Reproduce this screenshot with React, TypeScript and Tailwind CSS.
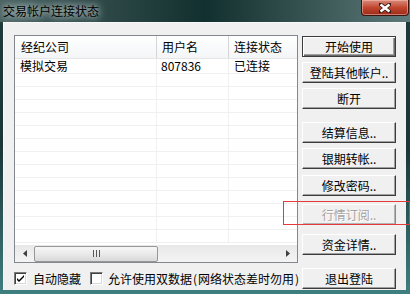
import React from 'react';

const font = "font-['SimSun','Noto_Sans_CJK_SC',sans-serif]";

type BtnProps = { label: string; mt: string; disabled?: boolean; primary?: boolean };

function Btn({ label, mt, disabled, primary }: BtnProps) {
  let cls =
    'h-[21px] w-[94px] flex items-center justify-center text-[12px] leading-none whitespace-nowrap bg-[#f0f0f0] border ';
  if (primary) {
    cls += 'border-[#3c3c3c] shadow-[inset_1px_1px_0_#ffffff,inset_-1px_-1px_0_#6a6a6a,inset_-2px_-2px_0_#a0a0a0] text-black';
  } else if (disabled) {
    cls += 'border-t-white border-l-white border-r-[#8a8a8a] border-b-[#8a8a8a] shadow-[inset_-1px_-1px_0_#b4b4b4] text-[#a3a3a3] [text-shadow:1px_1px_0_#ffffff]';
  } else {
    cls += 'border-t-white border-l-white border-r-[#3c3c3c] border-b-[#3c3c3c] shadow-[inset_-1px_-1px_0_#a0a0a0] text-black';
  }
  return (
    <div className={`${mt} ${cls}`}>
      {label}
    </div>
  );
}

function Check({ checked }: { checked?: boolean }) {
  return (
    <div className="w-[13px] h-[13px] bg-white border border-t-[#7a7a7a] border-l-[#7a7a7a] border-r-white border-b-white shadow-[inset_1px_1px_0_#404040,inset_-1px_-1px_0_#d8d8d8] flex items-center justify-center shrink-0">
      {checked && (
        <svg width="9" height="9" viewBox="0 0 9 9">
          <path d="M1 4 L3 6 L8 1 L8 3 L3 8 L1 6 Z" fill="#000" />
        </svg>
      )}
    </div>
  );
}

const rows = Array.from({ length: 13 });

export default function App() {
  return (
    <div className={`relative w-[410px] h-[294px] overflow-hidden flex flex-col bg-gradient-to-b from-[#1f3a3b] via-[#1b3637] to-[#3f7f80] ${font}`}>
      {/* title bar */}
      <div className="h-[22px] shrink-0 flex items-start bg-gradient-to-r from-[#4a6262] via-[#12302f] to-[#5e7a7a]">
        <span className="pl-[3px] pt-[4px] text-[12px] leading-[13px] text-black whitespace-nowrap [text-shadow:0_0_6px_#c9d6d6,0_0_10px_#c9d6d6]">
          交易帐户连接状态
        </span>
        <div className="ml-auto mr-[1px] w-[48px] h-[16px] rounded-b-[4px] border border-t-0 border-[#3b1410] bg-gradient-to-b from-[#d98a7c] via-[#c2462f] to-[#9b2a17] shadow-[inset_0_0_0_1px_rgba(255,200,190,0.5)] flex items-center justify-center">
          <svg width="12" height="10" viewBox="0 0 12 10">
            <path d="M1 1 L11 9 M11 1 L1 9" stroke="#3a1a14" strokeWidth="4" strokeLinecap="square" />
            <path d="M1.5 1.5 L10.5 8.5 M10.5 1.5 L1.5 8.5" stroke="#ffffff" strokeWidth="2.4" />
          </svg>
        </div>
      </div>

      {/* client */}
      <div className="flex-1 flex pl-[3px] pr-[4px] pb-[4px]">
        <div className="flex-1 flex bg-[#f0f0f0] border-l border-t border-[#f8f8f8] pt-[12px] pl-[10px]">
          <div className="w-[284px] flex flex-col">
            {/* list view */}
            <div className="h-[228px] border border-[#828790] bg-white flex flex-col text-[12px] leading-[12px] text-black">
              <div className="h-[23px] shrink-0 flex border-b border-[#e5e5e5] bg-gradient-to-b from-white to-[#f4f5f7]">
                <div className="w-[142px] border-r border-[#d5d5d5] pl-[6px] flex items-center whitespace-nowrap">经纪公司</div>
                <div className="w-[72px] border-r border-[#d5d5d5] pl-[5px] flex items-center whitespace-nowrap">用户名</div>
                <div className="flex-1 pl-[5px] flex items-center whitespace-nowrap">连接状态</div>
              </div>
              <div className="flex-1">
                <div className="h-[15px] flex border-b border-[#f0f0f0]">
                  <div className="w-[142px] border-r border-[#f0f0f0] pl-[5px] flex items-center whitespace-nowrap">模拟交易</div>
                  <div className="w-[72px] border-r border-[#f0f0f0] pl-[4px] flex items-center whitespace-nowrap">807836</div>
                  <div className="flex-1 pl-[5px] flex items-center whitespace-nowrap">已连接</div>
                </div>
                {rows.map((_, i) => (
                  <div key={i} className="h-[13px] flex border-b border-[#f0f0f0]">
                    <div className="w-[142px] border-r border-[#f0f0f0]" />
                    <div className="w-[72px] border-r border-[#f0f0f0]" />
                    <div className="flex-1" />
                  </div>
                ))}
              </div>
              {/* horizontal scrollbar */}
              <div className="h-[17px] shrink-0 flex items-center bg-gradient-to-b from-[#e8e8e8] to-[#f4f4f4]">
                <div className="w-[19px] h-full flex items-center justify-center">
                  <svg width="4" height="7" viewBox="0 0 4 7"><path d="M4 0 L0 3.5 L4 7 Z" fill="#404040" /></svg>
                </div>
                <div className="w-[124px] h-[16px] rounded-[2px] border border-[#979797] bg-gradient-to-b from-[#f6f6f6] via-[#eaeaea] to-[#d8d8d8] flex items-center justify-center gap-[2px]">
                  <span className="w-[1px] h-[7px] bg-[#555]" />
                  <span className="w-[1px] h-[7px] bg-[#555]" />
                  <span className="w-[1px] h-[7px] bg-[#555]" />
                </div>
                <div className="ml-auto w-[19px] h-full flex items-center justify-center">
                  <svg width="4" height="7" viewBox="0 0 4 7"><path d="M0 0 L4 3.5 L0 7 Z" fill="#404040" /></svg>
                </div>
              </div>
            </div>

            {/* options */}
            <div className="mt-[9px] flex items-center text-[12px] text-black leading-[13px] whitespace-nowrap">
              <Check checked />
              <span className="ml-[6px]">自动隐藏</span>
              <span className="ml-[9px]"><Check /></span>
              <span className="ml-[5px]">允许使用双数据<span className="px-[1px]">(</span>网络状态差时勿用<span className="px-[1px]">)</span></span>
            </div>
          </div>

          {/* buttons */}
          <div className="ml-[4px] flex flex-col pt-[1px]">
            <Btn label="开始使用" mt="mt-0" primary />
            <Btn label="登陆其他帐户.." mt="mt-[5px]" />
            <Btn label="断开" mt="mt-[5px]" />
            <Btn label="结算信息.." mt="mt-[13px]" />
            <Btn label="银期转帐.." mt="mt-[5px]" />
            <Btn label="修改密码.." mt="mt-[6px]" />
            <Btn label="行情订阅.." mt="mt-[8px]" disabled />
            <Btn label="资金详情.." mt="mt-[9px]" />
            <Btn label="退出登陆" mt="mt-[13px]" />
          </div>
        </div>
      </div>

      {/* highlight box */}
      <div className="absolute left-[283px] top-[201px] w-[127px] h-[24px] border border-[#e23b3b]" />
    </div>
  );
}
